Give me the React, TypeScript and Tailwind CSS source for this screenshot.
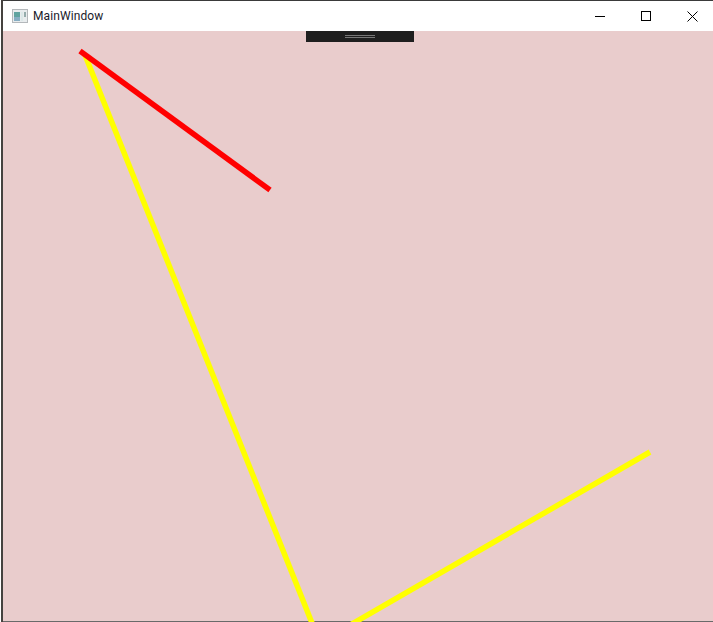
import React from 'react';

function AppIcon() {
  return (
    <svg width="16" height="14" viewBox="0 0 16 14" className="shrink-0">
      <rect x="0.5" y="0.5" width="15" height="13" fill="#e8ecee" stroke="#b4b8bb" />
      <rect x="2" y="3" width="6" height="9" fill="#5fa39f" />
      <rect x="2" y="8" width="6" height="4" fill="#86adc2" />
      <rect x="9" y="3" width="2" height="9" fill="#dbe8e8" />
      <rect x="12" y="3" width="2" height="5" fill="#95acac" />
    </svg>
  );
}

function WindowButtons() {
  return (
    <div className="flex items-center h-full -mr-[2px]">
      <div className="w-[46px] h-full flex items-center justify-center">
        <div className="w-[10px] h-px bg-black" />
      </div>
      <div className="w-[46px] h-full flex items-center justify-center">
        <div className="w-[10px] h-[10px] border border-black" />
      </div>
      <div className="w-[46px] h-full flex items-center justify-center">
        <svg width="11" height="11" viewBox="0 0 11 11">
          <path d="M0.5 0.5 L10.5 10.5 M10.5 0.5 L0.5 10.5" stroke="#000" strokeWidth="1" fill="none" />
        </svg>
      </div>
    </div>
  );
}

export default function App() {
  return (
    <div className="w-[713px] h-[622px] bg-white overflow-hidden pl-[1px] font-['Roboto','Open_Sans',sans-serif]">
      <div className="h-full flex flex-col border-l-2 border-[#45423f]">
        {/* Title bar */}
        <header className="h-[31px] shrink-0 flex items-center justify-between border-t border-[#3a3a3a] pl-[9px]">
          <div className="flex items-center gap-[5px]">
            <AppIcon />
            <span className="text-[12px] tracking-[0.1px] text-[#1a1a2a]">MainWindow</span>
          </div>
          <WindowButtons />
        </header>

        {/* Client area */}
        <div className="relative flex-1 flex flex-col items-center bg-[#e9cccc] border-b border-[#6a6a6a]">
          {/* Debug toolbar */}
          <div className="w-[108px] h-[11px] ml-[3px] bg-[#1e1e1e] flex flex-col items-center justify-center gap-[1px]">
            <div className="w-[30px] h-px bg-[#777]" />
            <div className="w-[30px] h-px bg-[#777]" />
          </div>

          {/* Drawing */}
          <svg className="absolute left-[-3px] top-[-31px]" width="713" height="622" viewBox="0 0 713 622">
            <line x1="85" y1="55" x2="314" y2="628" stroke="#ffff00" strokeWidth="5.5" />
            <line x1="650" y1="452" x2="345" y2="628" stroke="#ffff00" strokeWidth="5.5" />
            <line x1="80" y1="51" x2="270" y2="190" stroke="#ff0000" strokeWidth="5.5" />
          </svg>
        </div>
      </div>
    </div>
  );
}
